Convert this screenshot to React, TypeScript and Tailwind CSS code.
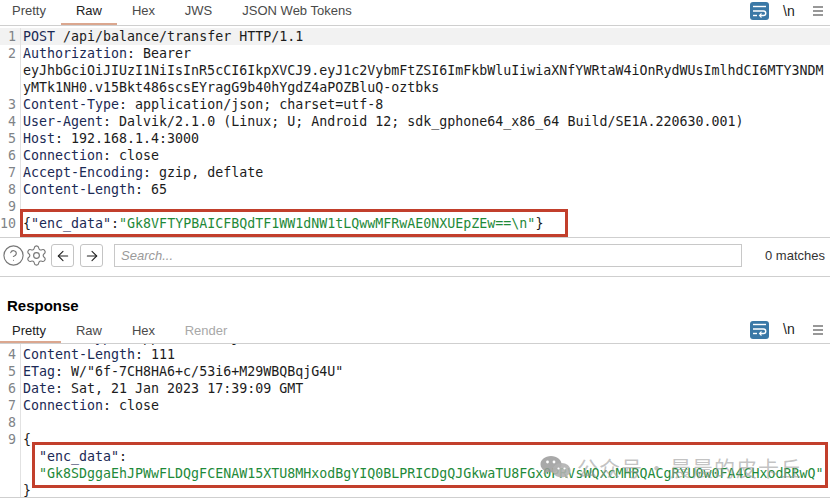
import { ArrowLeft, ArrowRight, CircleHelp, Settings } from "lucide-react";

const mono = "font-['DejaVu_Sans_Mono','Liberation_Mono',monospace]";
const sans = "font-['Liberation_Sans',Arial,sans-serif]";

function Row({ n, children, hl }: { n?: number; children?: React.ReactNode; hl?: boolean }) {
  return (
    <div className={`flex h-[17px] leading-[17px] ${hl ? "bg-[#f2f2f2]" : ""}`}>
      <div className="w-[21px] shrink-0 border-r border-[#e2e2e2] pr-[4px] text-right text-[#7f8488]">{n}</div>
      <div className="ml-[2px] whitespace-pre text-[#1c1c1c]">{children}</div>
    </div>
  );
}

function H({ k, v }: { k: string; v: string }) {
  return (
    <>
      <span className="text-[#1b2a55]">{k}</span>
      {v}
    </>
  );
}

function WrapIcon() {
  return (
    <div className="flex h-[18px] w-[19px] items-center justify-center rounded-[3px] bg-[#3a78a6]">
      <svg width="15" height="13" viewBox="0 0 15 13" fill="none" stroke="#fff" strokeWidth="1.4">
        <path d="M1 1.500h13" />
        <path d="M1 6h10.500a2.200 2.200 0 0 1 0 4.500H8" />
        <path d="M9.500 8.500 7.500 10.500l2 2" strokeWidth="1.100" />
        <path d="M1 10.500h4" />
      </svg>
    </div>
  );
}

function Tools({ pb }: { pb: string }) {
  return (
    <div className={`flex items-center ${pb}`}>
      <WrapIcon />
      <span className={`ml-[14px] w-[12px] text-[14px] text-[#222] ${sans}`}>\n</span>
      <svg className="ml-[18px]" width="10" height="10" viewBox="0 0 10 10" stroke="#333" strokeWidth="1.200">
        <path d="M0 1h10M0 5h10M0 9h10" />
      </svg>
    </div>
  );
}

function Tabs({ items, active, tall }: { items: { t: string; w: number; dim?: boolean; cls?: string }[]; active: string; tall?: boolean }) {
  return (
    <div className={`flex items-stretch justify-between border-b border-[#cfcfcf] pr-[7px] ${tall ? "h-[26px]" : "h-[23px]"}`}>
      <div className={`flex text-[13px] ${sans}`}>
        {items.map((i) => (
          <div
            key={i.t}
            style={{ width: i.w }}
            className={`flex items-center justify-center ${i.cls ?? ""} ${tall ? "pb-[2px]" : "pb-[1px]"} border-b-[2px] ${i.t === active ? "border-[#dba78f] text-[#222]" : i.dim ? "border-transparent text-[#a8a8a8]" : "border-transparent text-[#4a4a4a]"}`}
          >
            {i.t}
          </div>
        ))}
      </div>
      <Tools pb={tall ? "pb-[3px]" : "pb-[5px]"} />
    </div>
  );
}

function NavButton({ children }: { children: React.ReactNode }) {
  return (
    <div className="flex h-[23px] w-[23px] items-center justify-center rounded-[3px] border border-[#c4c4c4]">
      {children}
    </div>
  );
}

export default function App() {
  return (
    <div className={`relative h-[500px] w-[830px] overflow-hidden bg-white text-[13.3px] ${mono}`}>
      <Tabs
        tall
        active="Raw"
        items={[
          { t: "Pretty", w: 61, cls: "pr-[3px]" },
          { t: "Raw", w: 56 },
          { t: "Hex", w: 53 },
          { t: "JWS", w: 57 },
          { t: "JSON Web Tokens", w: 140 },
        ]}
      />
      <div className="h-[212px] overflow-hidden border-b border-[#cfcfcf] pt-[2px]">
        <Row n={1} hl><H k="POST" v=" /api/balance/transfer HTTP/1.1" /></Row>
        <Row n={2}><H k="Authorization" v=": Bearer" /></Row>
        <Row>eyJhbGciOiJIUzI1NiIsInR5cCI6IkpXVCJ9.eyJ1c2VybmFtZSI6ImFkbWluIiwiaXNfYWRtaW4iOnRydWUsImlhdCI6MTY3NDM</Row>
        <Row>yMTk1NH0.v15Bkt486scsEYragG9b40hYgdZ4aPOZBluQ-oztbks</Row>
        <Row n={3}><H k="Content-Type" v=": application/json; charset=utf-8" /></Row>
        <Row n={4}><H k="User-Agent" v=": Dalvik/2.1.0 (Linux; U; Android 12; sdk_gphone64_x86_64 Build/SE1A.220630.001)" /></Row>
        <Row n={5}><H k="Host" v=": 192.168.1.4:3000" /></Row>
        <Row n={6}><H k="Connection" v=": close" /></Row>
        <Row n={7}><H k="Accept-Encoding" v=": gzip, deflate" /></Row>
        <Row n={8}><H k="Content-Length" v=": 65" /></Row>
        <Row n={9} />
        <Row n={10}>
          {"{"}<span className="text-[#1b2a55]">"enc_data"</span>:<span className="text-[#1f8a3a]">"Gk8VFTYPBAICFBQdTF1WW1dNW1tLQwwMFRwAE0NXUEpZEw==\n"</span>{"}"}
        </Row>
      </div>
      <div className={`flex h-[39px] items-center border-b border-[#cfcfcf] pb-[3px] pl-[2px] pr-[5px] ${sans}`}>
        <CircleHelp size={23} strokeWidth={1.2} color="#777" />
        <Settings size={23} strokeWidth={1.2} color="#777" />
        <div className="ml-[3px] flex gap-[6px]">
          <NavButton><ArrowLeft size={16} strokeWidth={1.6} color="#222" /></NavButton>
          <NavButton><ArrowRight size={16} strokeWidth={1.6} color="#222" /></NavButton>
        </div>
        <div className="ml-[11px] flex h-[23px] w-[628px] items-center border border-[#c8c8c8] pl-[6px] text-[13px] italic text-[#9a9a9a]">
          Search...
        </div>
        <div className="ml-auto text-[13px] text-[#333]">0 matches</div>
      </div>
      <div className={`h-[44px] pl-[7px] pt-[20px] text-[15px] font-bold leading-[17px] text-black ${sans}`}>Response</div>
      <Tabs
        active="Pretty"
        items={[
          { t: "Pretty", w: 61, cls: "pr-[3px]" },
          { t: "Raw", w: 56 },
          { t: "Hex", w: 53 },
          { t: "Render", w: 72, dim: true },
        ]}
      />
      <div className="h-[154px] overflow-hidden border-b border-[#cfcfcf]">
        <div className="mt-[-15px]">
          <Row n={3}><H k="Content-Type" v=": application/json; charset=utf-8" /></Row>
          <Row n={4}><H k="Content-Length" v=": 111" /></Row>
          <Row n={5}><H k="ETag" v={': W/"6f-7CH8HA6+c/53i6+M29WBQBqjG4U"'} /></Row>
          <Row n={6}><H k="Date" v=": Sat, 21 Jan 2023 17:39:09 GMT" /></Row>
          <Row n={7}><H k="Connection" v=": close" /></Row>
          <Row n={8} />
          <Row n={9}>{"{"}</Row>
          <Row>  <span className="text-[#1b2a55]">"enc_data"</span>:</Row>
          <Row>  <span className="text-[#1f8a3a]">"Gk8SDggaEhJPWwFLDQgFCENAW15XTU8MHxodBgYIQ0BLPRICDgQJGkwaTU8FGx0PRVsWQxcMHRQACgRYU0w0FA4CHxodRRwQ"</span></Row>
          <Row>{"}"}</Row>
        </div>
      </div>

      <div className="absolute left-[20px] top-[209px] h-[28px] w-[548px] border-[3px] border-[#c23f2c]" />
      <div className="absolute left-[32px] top-[442px] h-[46px] w-[796px] border-[3px] border-[#c23f2c]" />

      <div className="absolute left-[540px] top-[452px] flex items-center text-[21px] leading-[30px] text-[#9a9a9a]/60 font-['Noto_Sans_CJK_SC',sans-serif]">
        <svg width="31" height="24" viewBox="0 0 31 24">
          <path d="M11 1c6 0 10.500 3.700 10.500 8.300 0 4.600-4.500 8.200-10.500 8.200-1.300 0-2.500-.2-3.600-.5L3.500 19l1-3.300C2 14.200.5 11.900.5 9.300.5 4.700 5 1 11 1z" fill="#9a9a9a" fillOpacity=".85" />
          <path d="M21.500 8c5 0 9 3.200 9 7.200 0 2.200-1.200 4.100-3.100 5.400l.8 2.900-3.300-1.600c-1.100.3-2.200.5-3.400.5-5 0-9-3.100-9-7.100S16.500 8 21.500 8z" fill="#b0b0b0" fillOpacity=".9" />
          <circle cx="7.500" cy="7" r="1.400" fill="#fff" />
          <circle cx="14" cy="7" r="1.400" fill="#fff" />
          <circle cx="18.500" cy="13.500" r="1.100" fill="#fff" />
          <circle cx="24.500" cy="13.500" r="1.100" fill="#fff" />
        </svg>
        <span className="ml-[6px] tracking-[1px]">公众号</span>
        <span className="w-[27px] text-center">·</span>
        <span className="tracking-[1px]">晨晨的皮卡丘</span>
      </div>
    </div>
  );
}
